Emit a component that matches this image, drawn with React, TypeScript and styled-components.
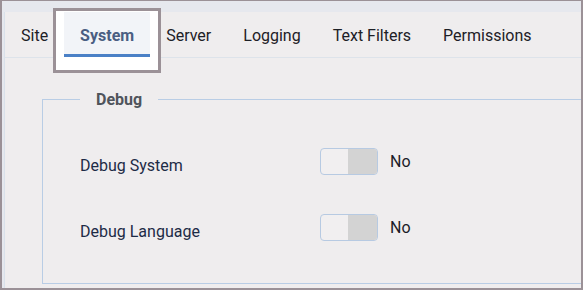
import React from "react";
import styled, { createGlobalStyle } from "styled-components";

const Global = createGlobalStyle`
  html, body { margin: 0; padding: 0; }
  body { font-family: Roboto, "Noto Sans", "Liberation Sans", sans-serif; }
`;

const Frame = styled.div`
  position: relative;
  box-sizing: border-box;
  width: 583px;
  height: 290px;
  overflow: hidden;
  background: #e6e8ee;
  border-style: solid;
  border-color: #9b9197;
  border-width: 1px 2px 2px 2px;
  padding-top: 11px;
`;

const Content = styled.div`
  margin-left: 2px;
  height: 100%;
  background: #efedee;
  border-left: 1px solid #d9e1ea;
`;

const TabBar = styled.nav`
  position: relative;
  display: flex;
  height: 45px;
  border-bottom: 1px solid #dde3ea;
`;

const Tab = styled.div<{ $active?: boolean }>`
  position: relative;
  z-index: 2;
  display: flex;
  align-items: center;
  box-sizing: border-box;
  height: 45px;
  padding: 4px 16px 0;
  font-size: 16px;
  line-height: 19px;
  font-weight: ${(p) => (p.$active ? 700 : 400)};
  color: ${(p) => (p.$active ? "#4a5e82" : "#1d2026")};
  background: ${(p) => (p.$active ? "#f2f4f8" : "transparent")};
  border-bottom: 3px solid ${(p) => (p.$active ? "#4a80c6" : "transparent")};
`;

const Highlight = styled.div`
  position: absolute;
  z-index: 1;
  left: 51px;
  top: 7px;
  width: 108px;
  height: 65px;
  box-sizing: border-box;
  border: 3px solid #9b9197;
  background: #ffffff;
`;

const Fieldset = styled.fieldset`
  margin: 32px 0 0 37px;
  width: 620px;
  box-sizing: border-box;
  border: 1px solid #b9cde5;
  border-radius: 0;
  padding: 39px 0 42px 37px;
  min-inline-size: 0;
`;

const Legend = styled.legend`
  padding: 0 16px;
  font-size: 16px;
  line-height: 19px;
  font-weight: 700;
  color: #4f545b;
`;

const Rows = styled.div`
  display: flex;
  flex-direction: column;
  gap: 39px;
`;

const Row = styled.div`
  display: flex;
  align-items: flex-start;
`;

const Label = styled.label`
  width: 240px;
  padding-top: 8px;
  font-size: 16px;
  line-height: 19px;
  color: #1d2b46;
`;

const Switch = styled.div`
  display: flex;
  justify-content: flex-end;
  box-sizing: border-box;
  width: 58px;
  height: 27px;
  border: 1px solid #b7cae2;
  border-radius: 4px;
  background: #f1eff0;
  overflow: hidden;
`;

const Knob = styled.span`
  width: 29px;
  height: 100%;
  background: #d3d3d3;
`;

const Value = styled.span`
  margin-left: 12px;
  font-size: 16px;
  line-height: 27px;
  color: #1b1c28;
`;

const tabs = ["Site", "System", "Server", "Logging", "Text Filters", "Permissions"];
const fields = ["Debug System", "Debug Language"];

export default function App() {
  return (
    <>
      <Global />
      <Frame>
        <Highlight />
        <Content>
          <TabBar>
            {tabs.map((t) => (
              <Tab key={t} $active={t === "System"}>
                {t}
              </Tab>
            ))}
          </TabBar>
          <Fieldset>
            <Legend>Debug</Legend>
            <Rows>
              {fields.map((f) => (
                <Row key={f}>
                  <Label>{f}</Label>
                  <Switch>
                    <Knob />
                  </Switch>
                  <Value>No</Value>
                </Row>
              ))}
            </Rows>
          </Fieldset>
        </Content>
      </Frame>
    </>
  );
}
